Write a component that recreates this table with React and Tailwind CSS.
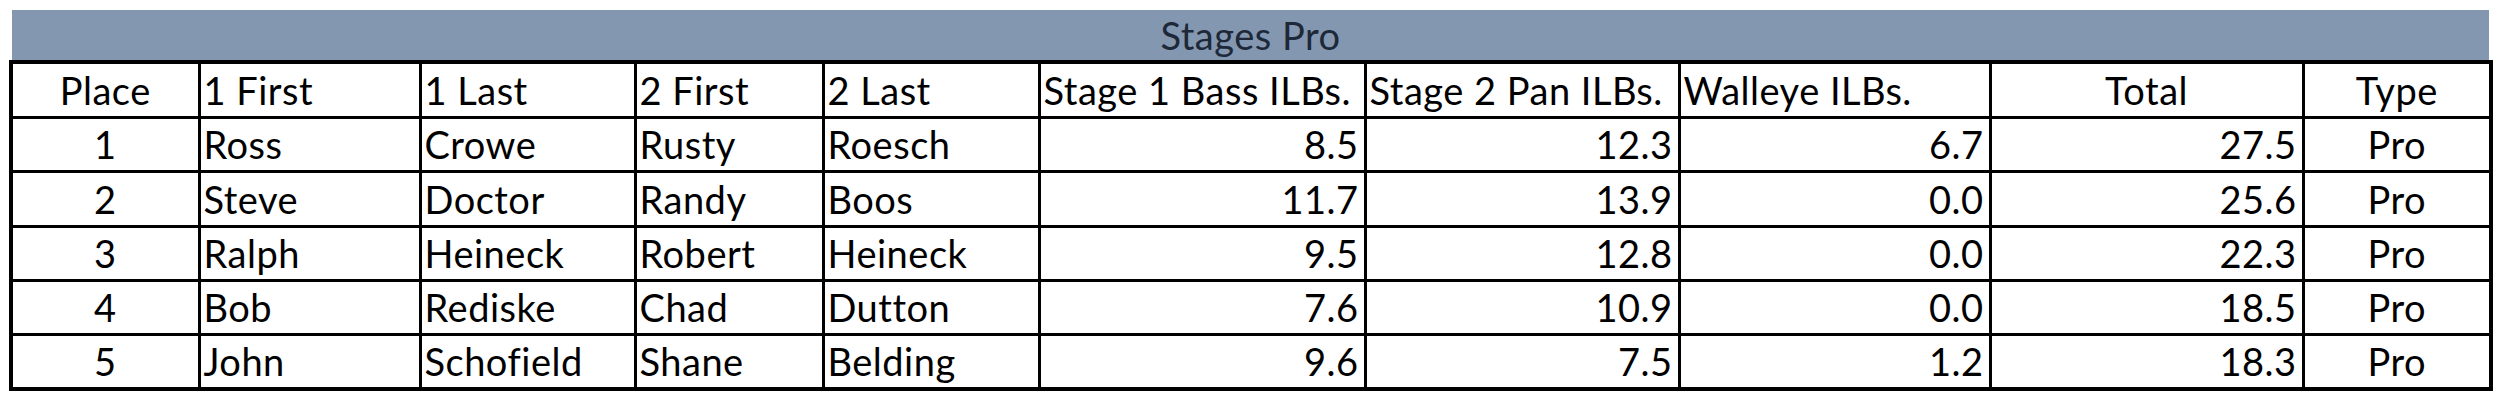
const columns = [
  { label: "Place", width: 188, head: "center", body: "center" },
  { label: "1 First", width: 221, head: "left", body: "left" },
  { label: "1 Last", width: 215, head: "left", body: "left" },
  { label: "2 First", width: 188, head: "left", body: "left" },
  { label: "2 Last", width: 216, head: "left", body: "left" },
  { label: "Stage 1 Bass ILBs.", width: 326, head: "left", body: "right" },
  { label: "Stage 2 Pan ILBs.", width: 314, head: "left", body: "right" },
  { label: "Walleye ILBs.", width: 311, head: "left", body: "right" },
  { label: "Total", width: 313, head: "center", body: "right" },
  { label: "Type", width: 188, head: "center", body: "center" },
];

const rows = [
  ["1", "Ross", "Crowe", "Rusty", "Roesch", "8.5", "12.3", "6.7", "27.5", "Pro"],
  ["2", "Steve", "Doctor", "Randy", "Boos", "11.7", "13.9", "0.0", "25.6", "Pro"],
  ["3", "Ralph", "Heineck", "Robert", "Heineck", "9.5", "12.8", "0.0", "22.3", "Pro"],
  ["4", "Bob", "Rediske", "Chad", "Dutton", "7.6", "10.9", "0.0", "18.5", "Pro"],
  ["5", "John", "Schofield", "Shane", "Belding", "9.6", "7.5", "1.2", "18.3", "Pro"],
];

const align = {
  left: "text-left pl-[3px]",
  center: "text-center",
  right: "text-right pr-[5px]",
};

const rowHeights = ["h-[54px]", "h-[55px]", "h-[54px]", "h-[54px]", "h-[55px]"];

export default function App() {
  return (
    <div
      className="bg-white pt-[10px] pl-[9px] w-[2500px] h-[403px] text-black tracking-[0.5px]"
      style={{ fontFamily: "Lato, 'Open Sans', sans-serif" }}
    >
      <div className="w-[2483px]">
        <div className="mx-[3px] h-[50px] bg-[#8497b0] flex items-center justify-center text-[38px] text-[#1d2838] leading-none">
          Stages Pro
        </div>
        <table className="table-fixed border-collapse w-[2483px] border-[4px] border-black text-[38px] leading-none">
          <colgroup>
            {columns.map((c) => (
              <col key={c.label} style={{ width: c.width }} />
            ))}
          </colgroup>
          <thead>
            <tr className="h-[55px]">
              {columns.map((c) => (
                <th
                  key={c.label}
                  className={`border-[3px] border-black font-normal whitespace-nowrap overflow-hidden ${align[c.head]}`}
                >
                  {c.label}
                </th>
              ))}
            </tr>
          </thead>
          <tbody>
            {rows.map((r, i) => (
              <tr key={r[0]} className={rowHeights[i]}>
                {r.map((v, j) => (
                  <td
                    key={j}
                    className={`border-[3px] border-black whitespace-nowrap overflow-hidden ${align[columns[j].body]}`}
                  >
                    {v}
                  </td>
                ))}
              </tr>
            ))}
          </tbody>
        </table>
      </div>
    </div>
  );
}
